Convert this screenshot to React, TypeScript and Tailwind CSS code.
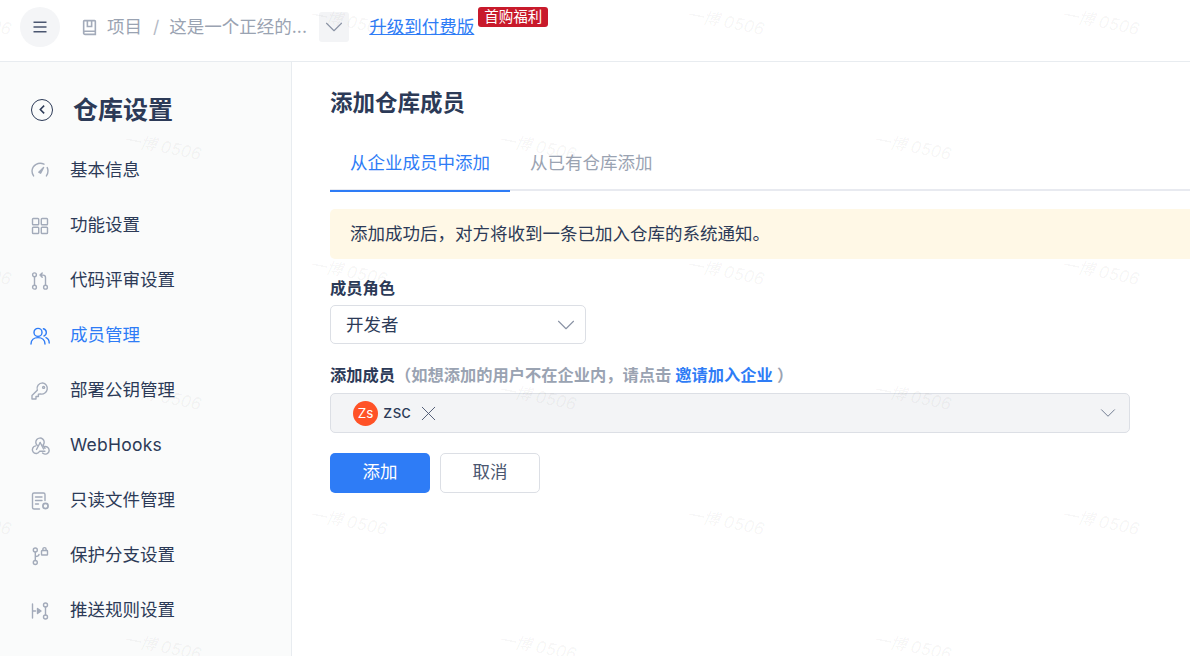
import type { ReactNode } from "react";
import { ChevronDown, X } from "lucide-react";

const FONT = "font-['Inter','Noto_Sans_CJK_SC',sans-serif]";

function Icon({ children, className = "text-[#a3abba]" }: { children: ReactNode; className?: string }) {
  return (
    <svg
      viewBox="0 0 20 20"
      fill="none"
      stroke="currentColor"
      strokeWidth="1.4"
      strokeLinecap="round"
      strokeLinejoin="round"
      className={`h-5 w-5 shrink-0 ${className}`}
    >
      {children}
    </svg>
  );
}

const navItems: { label: string; active?: boolean; icon: ReactNode }[] = [
  {
    label: "基本信息",
    icon: (
      <>
        <path d="M14 3.200A8.200 8.200 0 0 0 2 10c0 1.800.6 3.500 1.600 4.900M16.400 14.900A8.200 8.200 0 0 0 18 10c0-1.200-.3-2.400-.8-3.400" />
        <path d="M8.800 11.200 13.600 6.400l-3 5.800z" fill="currentColor" />
      </>
    ),
  },
  {
    label: "功能设置",
    icon: (
      <>
        <rect x="2.500" y="2.500" width="6.200" height="6.200" rx="0.800" />
        <rect x="11.300" y="2.500" width="6.200" height="6.200" rx="0.800" />
        <rect x="2.500" y="11.300" width="6.200" height="6.200" rx="0.800" />
        <rect x="11.300" y="11.300" width="6.200" height="6.200" rx="0.800" />
      </>
    ),
  },
  {
    label: "代码评审设置",
    icon: (
      <>
        <circle cx="4.500" cy="3.800" r="1.900" />
        <circle cx="4.500" cy="16.200" r="1.900" />
        <circle cx="15.500" cy="16.200" r="1.900" />
        <path d="M4.500 5.700v8.600M15.500 14.300V6.500c0-1.400-.9-2.400-2.400-2.400h-1.400" />
        <path d="M12.200 2 10 4.100l2.200 2.100" fill="currentColor" />
      </>
    ),
  },
  {
    label: "成员管理",
    active: true,
    icon: (
      <>
        <circle cx="8" cy="6.400" r="4" />
        <path d="M1 18c0-4 3-6.400 7-6.400s7 2.400 7 6.400" />
        <path d="M13.400 2.800a3.800 3.800 0 0 1 .6 7.200M16 11.600c1.900.8 3.200 2.900 3.200 5.400" />
      </>
    ),
  },
  {
    label: "部署公钥管理",
    icon: (
      <>
        <path d="M12.600 1.900a5.600 5.600 0 0 0-5.300 7.300L2 14.500V18h4v-2.500h2.400v-2.400l2.300-.1a5.600 5.600 0 1 0 1.900-11.100z" />
        <circle cx="13.600" cy="6.400" r="1" />
      </>
    ),
  },
  {
    label: "WebHooks",
    icon: (
      <>
        <path d="M7.300 9.500a4.200 4.200 0 1 1 5.800-.4" />
        <path d="M13.100 9.100 15 12.300" />
        <path d="M5.800 9.900a3.800 3.800 0 1 0 3.800 5.400h5.300" />
        <path d="M14.200 10.700a3.800 3.800 0 1 1 .7 7.400 3.800 3.800 0 0 1-2.400-1" />
        <path d="M10.200 6.500 6.500 13.500" />
        <path d="M10.200 6.500 13.600 13" />
      </>
    ),
  },
  {
    label: "只读文件管理",
    icon: (
      <>
        <path d="M9.500 18H4a1.500 1.500 0 0 1-1.500-1.500v-13A1.500 1.500 0 0 1 4 2h9.500A1.500 1.500 0 0 1 15 3.500v6" />
        <path d="M5.500 6h6.500M5.500 9.500h6.500M5.500 13h3" />
        <circle cx="15.500" cy="15" r="2.600" strokeWidth="1.700" />
      </>
    ),
  },
  {
    label: "保护分支设置",
    icon: (
      <>
        <circle cx="5.300" cy="4" r="2" />
        <circle cx="5.300" cy="16.500" r="2" />
        <path d="M5.300 6v8.500M5.300 10.500c2.500 0 3.500-.6 3.700-2" />
        <rect x="11.500" y="4.500" width="6" height="4.500" rx="0.600" />
        <path d="M12.900 4.500V3.200a1.600 1.600 0 0 1 3.200 0v1.300" />
      </>
    ),
  },
  {
    label: "推送规则设置",
    icon: (
      <>
        <path d="M2.500 3v14M2.500 10h3" />
        <path d="M7.500 7.500 11 10l-3.500 2.500z" fill="currentColor" />
        <circle cx="15.500" cy="4" r="2" />
        <circle cx="15.500" cy="16" r="2" />
        <path d="M15.500 6v8" />
      </>
    ),
  },
];

// watermark repeats on a staggered 376 x 250 grid
const marks: [number, number][] = [
  [-66, 4], [310, 4], [687, 4], [1062, 4],
  [124, 129], [499, 129], [874, 129],
  [-66, 254], [310, 254], [687, 254], [1062, 254],
  [124, 379], [499, 379], [874, 379],
  [-66, 504], [310, 504], [687, 504], [1062, 504],
  [124, 629], [499, 629], [874, 629],
];

function Watermarks() {
  return (
    <div className="pointer-events-none absolute inset-0 overflow-hidden">
      {marks.map(([x, y]) => (
        <span
          key={`${x}-${y}`}
          className="absolute origin-left rotate-[11deg] whitespace-nowrap text-[16.500px] italic leading-5 text-black/[0.05]"
          style={{ left: x, top: y }}
        >
          一博 0506
        </span>
      ))}
    </div>
  );
}

function Header() {
  return (
    <header className="flex h-[62px] shrink-0 items-center border-b border-[#e8ecf0] pb-[7px] pl-5">
      <button type="button" className="-mt-px flex h-10 w-10 items-center justify-center rounded-full bg-[#f4f5f7]">
        <svg viewBox="0 0 16 16" className="h-4 w-4 text-[#4a5670]" fill="none" stroke="currentColor" strokeWidth="1.400">
          <path d="M1.500 3.200h13M1.500 8h13M1.500 12.800h13" />
        </svg>
      </button>
      <svg viewBox="0 0 16 16" className="ml-[21px] h-[17px] w-[17px] text-[#a3abba]" fill="none" stroke="currentColor" strokeWidth="1.500">
        <path d="M2.500 12.500V2.200c0-.4.300-.7.700-.7h9.600c.4 0 .7.300.7.700v12.300H4a1.500 1.500 0 0 1-1.500-2c.2-.6.800-1 1.500-1h9.500" />
        <path d="M6 1.500v5.500h4V1.500" />
      </svg>
      <span className="ml-[9px] text-[17.500px] text-[#9aa3b2]">项目</span>
      <span className="ml-[11px] text-[17.500px] text-[#b4bac6]">/</span>
      <span className="ml-[10px] w-[135px] whitespace-nowrap text-[17.500px] text-[#9aa3b2]">这是一个正经的...</span>
      <span className="ml-[15px] flex h-[30px] w-[30px] items-center justify-center rounded-[3px] bg-[#f3f4f6]">
        <ChevronDown className="h-[30px] w-[30px] text-[#8a93a5]" strokeWidth={0.900} />
      </span>
      <a className="ml-5 whitespace-nowrap text-[17.500px] text-[#2e7cf6] underline">升级到付费版</a>
      <span className="mb-[21px] ml-[4px] flex h-5 w-[70px] items-center justify-center rounded-[3px] bg-[#c81a2b] text-[14.500px] text-white">
        首购福利
      </span>
    </header>
  );
}

function Sidebar() {
  return (
    <aside className="w-[292px] shrink-0 border-r border-[#e8ecf0] bg-[#fafbfb]">
      <div className="flex h-[81px] items-center pb-[1px] pl-[31px] pt-[15px]">
        <span className="flex h-[22px] w-[22px] items-center justify-center rounded-full border-[1.500px] border-[#2c3a57]">
          <svg viewBox="0 0 10 10" className="h-[11px] w-[11px] text-[#2c3a57]" fill="none" stroke="currentColor" strokeWidth="1.400">
            <path d="M6.500 1.500 3 5l3.500 3.500" />
          </svg>
        </span>
        <h2 className="ml-[20px] text-[25px] font-bold leading-[34px] text-[#2c3a57]">仓库设置</h2>
      </div>
      <nav>
        {navItems.map((item) => (
          <div key={item.label} className="flex h-[55px] items-center pl-[30px]">
            <Icon className={item.active ? "text-[#2e7cf6]" : "text-[#a3abba]"}>{item.icon}</Icon>
            <span
              className={`ml-5 text-[17.500px] ${item.active ? "text-[#2e7cf6]" : "text-[#2c3a57]"} ${
                item.label === "WebHooks" ? "tracking-[0.250px]" : ""
              }`}
            >
              {item.label}
            </span>
          </div>
        ))}
      </nav>
    </aside>
  );
}

function Main() {
  return (
    <main className="min-w-0 flex-1 pl-[38px] pt-[25px]">
      <h1 className="text-[22.500px] font-bold leading-8 text-[#2c3a57]">添加仓库成员</h1>
      <div className="mt-[15px] flex h-[57px] border-b-[2.500px] border-[#e8eaf0]">
        <div className="-mb-[2.500px] flex w-[180px] items-center justify-center border-b-[2.500px] border-[#2e7cf6] pt-[3px] text-[17.500px] text-[#2e7cf6]">
          从企业成员中添加
        </div>
        <div className="ml-5 flex items-center pt-[3px] text-[17.500px] text-[#9aa3b2]">从已有仓库添加</div>
      </div>
      <div className="mt-[18px] flex h-[50px] items-center rounded-l-[5px] bg-[#fff8e6] pl-5 text-[17.500px] text-[#2c3a57]">
        添加成功后，对方将收到一条已加入仓库的系统通知。
      </div>
      <div className="mt-[19px] text-[16.250px] font-semibold leading-5 text-[#2c3a57]">成员角色</div>
      <div className="mt-[7px] flex h-[39px] w-[256px] items-center justify-between rounded-[5px] border border-[#dcdfe5] bg-white pl-[15px] pr-[4px] text-[17.500px] text-[#2c3a57]">
        <span className="pt-[2px]">开发者</span>
        <ChevronDown className="h-[30px] w-[30px] text-[#8a93a5]" strokeWidth={0.900} />
      </div>
      <div className="mt-[21px] whitespace-nowrap text-[16.250px] font-semibold leading-5 text-[#9aa3b2]">
        <span className="text-[#2c3a57]">添加成员</span>（如想添加的用户不在企业内，请点击 <span className="text-[#2e7cf6]">邀请加入企业</span> ）
      </div>
      <div className="mt-2 flex h-10 w-[800px] items-center rounded-[5px] border border-[#dcdfe5] bg-[#f3f4f6] pl-[22px] pr-[8px]">
        <span className="flex h-[25px] w-[25px] items-center justify-center rounded-full bg-[#ff5227] text-[13.500px] text-white">
          Zs
        </span>
        <span className="ml-[5px] text-[17px] text-[#2c3a57]">zsc</span>
        <X className="ml-[5px] h-[25px] w-[25px] text-[#4a5670]" strokeWidth={0.900} />
        <ChevronDown className="ml-auto h-[26px] w-[26px] text-[#6f7a8f]" strokeWidth={0.900} />
      </div>
      <div className="mt-5 flex gap-[10px]">
        <button type="button" className="h-10 w-[100px] rounded-[5px] bg-[#2e7cf6] pb-[2px] text-[17.500px] text-white">
          添加
        </button>
        <button type="button" className="h-10 w-[100px] rounded-[5px] border border-[#dcdfe5] bg-white pb-[2px] text-[17.500px] text-[#4a5670]">
          取消
        </button>
      </div>
    </main>
  );
}

export default function App() {
  return (
    <div className={`relative flex h-[656px] w-[1190px] flex-col overflow-hidden bg-white ${FONT}`}>
      <Header />
      <div className="flex min-h-0 flex-1">
        <Sidebar />
        <Main />
      </div>
      <Watermarks />
    </div>
  );
}
